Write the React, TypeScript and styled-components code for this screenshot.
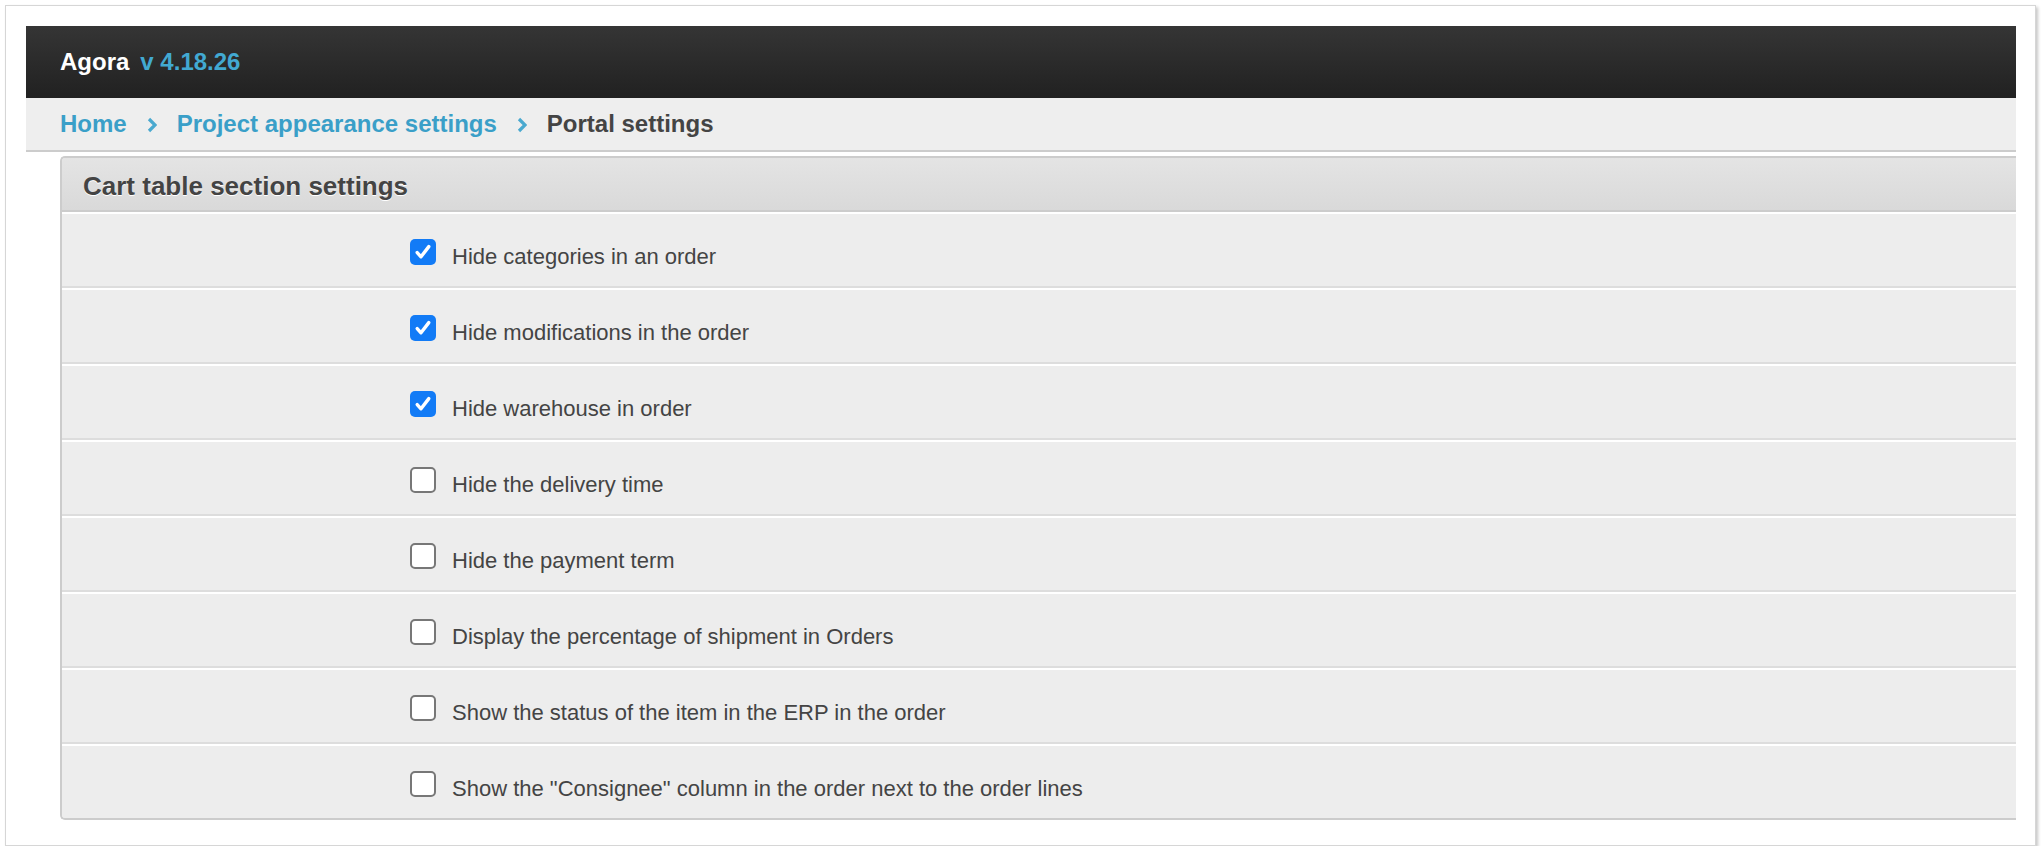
import React from "react";
import styled, { createGlobalStyle } from "styled-components";

const Global = createGlobalStyle`
  html, body { margin: 0; padding: 0; background: #ffffff; }
  body { font-family: "Liberation Sans", Arial, Helvetica, sans-serif; color: #444; }
`;

const Frame = styled.div`
  box-sizing: border-box;
  width: 2031px;
  margin: 5px 0 0 5px;
  border: 1px solid #d6d6d6;
  box-shadow: 2px 2px 3px rgba(0, 0, 0, 0.22);
  background: #fff;
  padding: 20px 19px 25px 20px;
`;

const TopBar = styled.header`
  height: 72px;
  display: flex;
  align-items: center;
  padding-left: 34px;
  background: linear-gradient(to bottom, #353535, #212121);
  font-size: 24px;
  font-weight: bold;
`;

const Brand = styled.span`
  color: #ffffff;
`;

const Version = styled.span`
  color: #42a9d2;
  margin-left: 11px;
`;

const Crumbs = styled.nav`
  height: 52px;
  display: flex;
  align-items: center;
  padding-left: 34px;
  background: #eeeeee;
  border-bottom: 2px solid #cccccc;
  font-size: 24px;
  font-weight: bold;
`;

const CrumbLink = styled.a`
  color: #3a9fc8;
  text-decoration: none;
`;

const CrumbCurrent = styled.span`
  color: #444444;
`;

const Sep = styled.svg`
  width: 10px;
  height: 16px;
  margin: 2px 20px 0 20px;
  flex: none;
`;

const Panel = styled.section`
  margin: 4px 0 0 34px;
  border: 2px solid #cccccc;
  border-right: none;
  border-radius: 5px 0 0 5px;
  overflow: hidden;
  background: #ededed;
`;

const PanelHead = styled.div`
  box-sizing: border-box;
  height: 54px;
  display: flex;
  align-items: center;
  padding: 4px 0 0 21px;
  background: linear-gradient(to bottom, #e4e4e4, #d9d9d9);
  border-bottom: 2px solid #cccccc;
  font-size: 26px;
  font-weight: bold;
  color: #444;
  text-shadow: 0 1px 0 #ffffff;
`;

const Row = styled.label<{ $last?: boolean }>`
  display: grid;
  grid-template-columns: 348px 1fr;
  align-items: center;
  height: 72px;
  border-top: 2px solid #ffffff;
  border-bottom: ${(p) => (p.$last ? "none" : "2px solid #dddddd")};
  background: #ededed;
`;

const Field = styled.span`
  display: flex;
  align-items: center;
  gap: 16px;
  font-size: 22px;
  color: #444444;
  padding-top: 3px;
`;

const Text = styled.span`
  padding-top: 5px;
  margin-bottom: -5px;
`;

const Box = styled.span<{ $on: boolean }>`
  box-sizing: border-box;
  width: 26px;
  height: 26px;
  flex: none;
  border-radius: 5px;
  display: flex;
  align-items: center;
  justify-content: center;
  background: ${(p) => (p.$on ? "#127bf6" : "#ffffff")};
  border: ${(p) => (p.$on ? "none" : "2px solid #777777")};
`;

const Chevron = () => (
  <Sep viewBox="0 0 10 16">
    <path d="M2 2 L8 8 L2 14" fill="none" stroke="#4aa9cf" strokeWidth="3.2" />
  </Sep>
);

const Check = () => (
  <svg width="18" height="18" viewBox="0 0 18 18">
    <path
      d="M3.2 9.6 L7 13.8 L14.8 3.6"
      fill="none"
      stroke="#ffffff"
      strokeWidth="3.4"
      strokeLinecap="round"
      strokeLinejoin="round"
    />
  </svg>
);

const options: { label: string; on: boolean }[] = [
  { label: "Hide categories in an order", on: true },
  { label: "Hide modifications in the order", on: true },
  { label: "Hide warehouse in order", on: true },
  { label: "Hide the delivery time", on: false },
  { label: "Hide the payment term", on: false },
  { label: "Display the percentage of shipment in Orders", on: false },
  { label: "Show the status of the item in the ERP in the order", on: false },
  { label: 'Show the "Consignee" column in the order next to the order lines', on: false },
];

export default function App() {
  return (
    <>
      <Global />
      <Frame>
        <TopBar>
          <Brand>Agora</Brand>
          <Version>v 4.18.26</Version>
        </TopBar>
        <Crumbs>
          <CrumbLink href="#">Home</CrumbLink>
          <Chevron />
          <CrumbLink href="#">Project appearance settings</CrumbLink>
          <Chevron />
          <CrumbCurrent>Portal settings</CrumbCurrent>
        </Crumbs>
        <Panel>
          <PanelHead>Cart table section settings</PanelHead>
          {options.map((o, i) => (
            <Row key={o.label} $last={i === options.length - 1}>
              <span />
              <Field>
                <Box $on={o.on}>{o.on && <Check />}</Box>
                <Text>{o.label}</Text>
              </Field>
            </Row>
          ))}
        </Panel>
      </Frame>
    </>
  );
}
